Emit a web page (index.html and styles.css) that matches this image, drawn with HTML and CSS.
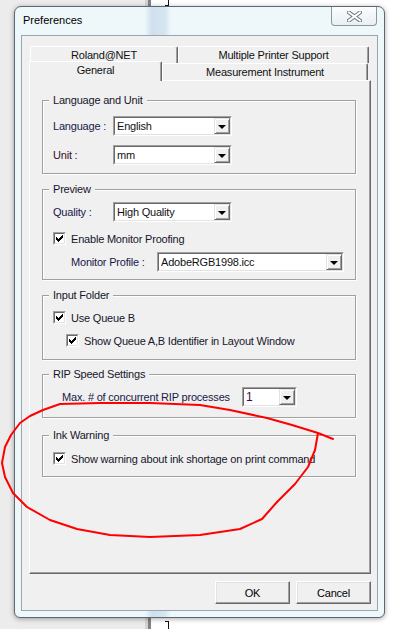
FILE: index.html
```html
<!DOCTYPE html>
<html>
<head>
    <title>Preferences</title>
    <link rel="stylesheet" href="styles.css">
</head>
<body>
    <span class="bracket bracket-top"></span>
    <span class="bracket bracket-bottom"></span>

    <div class="desk">
        <div class="window">
            <div class="titlebar">
                <span class="title">Preferences</span>
                <div class="close">
                    <svg width="15" height="11" viewBox="0 0 15 11">
                        <path d="M2 1.5 L13 9.5 M13 1.5 L2 9.5" stroke="#6c7781" stroke-width="4" stroke-linecap="square"/>
                        <path d="M2 1.5 L13 9.5 M13 1.5 L2 9.5" stroke="#fff" stroke-width="2" stroke-linecap="square"/>
                    </svg>
                </div>
            </div>

            <div class="client">
                <div class="tab-row back">
                    <div class="tab tab-roland">Roland@NET</div>
                    <div class="tab tab-multi">Multiple Printer Support</div>
                </div>
                <div class="tab-row front">
                    <div class="tab tab-general selected">General</div>
                    <div class="tab tab-measure">Measurement Instrument</div>
                </div>

                <div class="panel">
                    <!-- Language and Unit -->
                    <fieldset class="group g-lang">
                        <legend>Language and Unit</legend>
                        <div class="row">
                            <span class="label">Language :</span>
                            <div class="combo w-short">
                                <div class="combo-field">
                                    <span class="combo-value">English</span>
                                    <span class="combo-btn"><i class="arrow"></i></span>
                                </div>
                            </div>
                        </div>
                        <div class="row row-gap">
                            <span class="label label-unit">Unit :</span>
                            <div class="combo w-short">
                                <div class="combo-field">
                                    <span class="combo-value">mm</span>
                                    <span class="combo-btn"><i class="arrow"></i></span>
                                </div>
                            </div>
                        </div>
                    </fieldset>

                    <!-- Preview -->
                    <fieldset class="group g-preview">
                        <legend>Preview</legend>
                        <div class="row">
                            <span class="label">Quality :</span>
                            <div class="combo w-short">
                                <div class="combo-field">
                                    <span class="combo-value">High Quality</span>
                                    <span class="combo-btn"><i class="arrow"></i></span>
                                </div>
                            </div>
                        </div>
                        <label class="check-row cr-proof">
                            <span class="check"><span class="check-inner"><svg width="7" height="7" viewBox="0 0 7 7"><polygon points="0,2 2,4 7,-1 7,2 2,7 0,5" fill="#000"/></svg></span></span>
                            Enable Monitor Proofing
                        </label>
                        <div class="row row-profile">
                            <span class="label label-profile">Monitor Profile :</span>
                            <div class="combo w-long">
                                <div class="combo-field">
                                    <span class="combo-value">AdobeRGB1998.icc</span>
                                    <span class="combo-btn"><i class="arrow"></i></span>
                                </div>
                            </div>
                        </div>
                    </fieldset>

                    <!-- Input Folder -->
                    <fieldset class="group g-input">
                        <legend>Input Folder</legend>
                        <label class="check-row">
                            <span class="check"><span class="check-inner"><svg width="7" height="7" viewBox="0 0 7 7"><polygon points="0,2 2,4 7,-1 7,2 2,7 0,5" fill="#000"/></svg></span></span>
                            Use Queue B
                        </label>
                        <label class="check-row cr-sub">
                            <span class="check"><span class="check-inner"><svg width="7" height="7" viewBox="0 0 7 7"><polygon points="0,2 2,4 7,-1 7,2 2,7 0,5" fill="#000"/></svg></span></span>
                            Show Queue A,B Identifier in Layout Window
                        </label>
                    </fieldset>

                    <!-- RIP Speed Settings -->
                    <fieldset class="group g-rip">
                        <legend>RIP Speed Settings</legend>
                        <div class="row row-rip">
                            <span class="label label-rip">Max. # of concurrent RIP processes</span>
                            <div class="combo w-tiny">
                                <div class="combo-field">
                                    <span class="combo-value num">1</span>
                                    <span class="combo-btn"><i class="arrow"></i></span>
                                </div>
                            </div>
                        </div>
                    </fieldset>

                    <!-- Ink Warning -->
                    <fieldset class="group g-ink">
                        <legend>Ink Warning</legend>
                        <label class="check-row">
                            <span class="check"><span class="check-inner"><svg width="7" height="7" viewBox="0 0 7 7"><polygon points="0,2 2,4 7,-1 7,2 2,7 0,5" fill="#000"/></svg></span></span>
                            Show warning about ink shortage on print command
                        </label>
                    </fieldset>
                </div>

                <div class="buttons">
                    <button class="btn">OK</button>
                    <button class="btn">Cancel</button>
                </div>
            </div>
        </div>
    </div>

    <!-- red marker circle drawn over the screenshot -->
    <svg class="scribble" width="397" height="629" viewBox="0 0 397 629">
        <polyline fill="none" stroke="#f00" stroke-width="2" stroke-linejoin="round" stroke-linecap="round"
            points="333,439 318,433 292,425 267,418 230,410 200,405 150,403 100,403 60,404 43,410 30,416 20,423 11,435 5,447 2,463 5,477 13,493 27,507 50,520 77,529 110,535 150,537 200,535 240,529 262,519 277,502 295,484 308,467 315,450 318,433"/>
    </svg>
</body>
</html>
```

FILE: styles.css
```css
* {
    box-sizing: border-box;
}
body {
    margin: 0;
    width: 397px;
    height: 629px;
    overflow: hidden;
    position: relative;
    font-family: "Liberation Sans", Arial, sans-serif;
    font-size: 11px;
    letter-spacing: -0.2px;
    color: #16162c;
    background: linear-gradient(90deg, #ececec 0 145px, #d4d4d4 145px 148px, #828282 148px 151px, #fff 151px);
}
.bracket {
    position: absolute;
    left: 165px;
    width: 4px;
    height: 6px;
    border-right: 1px solid #111;
}
.bracket-top {
    top: 0;
    border-bottom: 1px solid #111;
}
.bracket-bottom {
    top: 621px;
    height: 8px;
    border-top: 1px solid #111;
}
.desk {
    padding: 6px 12px 0 14px;
}

/* Window frame */
.window {
    width: 371px;
    height: 612px;
    border: 1px solid #5f6870;
    border-radius: 7px 7px 6px 6px;
    background: linear-gradient(90deg, rgba(255,255,255,0) 130px, rgba(170,195,225,.45) 137px, rgba(170,195,225,.35) 150px, rgba(255,255,255,0) 156px), #eef7fa;
    box-shadow: 0 1px 5px rgba(0,0,0,.35);
    padding: 0 6px 6px;
    display: flex;
    flex-direction: column;
}
.titlebar {
    height: 28px;
    display: flex;
    justify-content: space-between;
    align-items: flex-start;
}
.title {
    padding: 7px 0 0 2px;
    color: #000;
    font-size: 11px;
    letter-spacing: 0;
}
.close {
    width: 46px;
    height: 19px;
    margin-right: 1px;
    border: 1px solid #8c969f;
    border-top: none;
    border-radius: 0 0 4px 4px;
    background: linear-gradient(#fbfdfe, #e9eff3);
    display: flex;
    align-items: center;
    justify-content: center;
}
.client {
    flex: 1;
    border: 1px solid #9aa5ad;
    background: #f0f0f0;
    padding: 10px 6px 0 7px;
    display: flex;
    flex-direction: column;
}

/* Tabs */
.tab-row {
    display: flex;
    height: 17px;
}
.tab-row.back {
    margin-left: 1px;
}
.tab {
    height: 17px;
    line-height: 16px;
    text-align: center;
    color: #111;
    background: #f0f0f0;
    border: 1px solid;
    border-bottom: none;
    border-color: #fff #696969 transparent #fff;
    box-shadow: inset -1px 0 0 #a0a0a0;
    border-radius: 2px 2px 0 0;
}
.tab-roland { width: 148px; }
.tab-multi { width: 191px; }
.tab-general { width: 133px; }
.tab-measure { width: 206px; }
.tab.selected {
    position: relative;
    z-index: 1;
    height: 20px;
    margin-top: -2px;
    line-height: 17px;
}
.panel {
    height: 494px;
    border: 1px solid;
    border-color: #fff #696969 #696969 #fff;
    box-shadow: inset -1px -1px 0 #a0a0a0;
    padding: 12px 14px 0 12px;
}

/* Group boxes */
.group {
    margin: 0;
    border: 1px solid #a0a0a0;
    box-shadow: inset 1px 1px 0 #fff, 1px 1px 0 #fff;
    padding: 0 8px 0 10px;
    min-width: 0;
}
.group legend {
    padding: 0 4px;
    margin-left: -4px;
    line-height: 14px;
    background: #f0f0f0;
}
.g-lang { padding-top: 9px; padding-bottom: 8px; }
.g-preview { margin-top: 8px; padding-top: 6px; padding-bottom: 7px; }
.g-input { margin-top: 8px; padding-top: 9px; padding-bottom: 12px; }
.g-rip { margin-top: 7px; padding-top: 6px; padding-bottom: 10px; }
.g-ink { margin-top: 10px; padding-top: 10px; padding-bottom: 11px; }

.row {
    display: flex;
    align-items: center;
    height: 20px;
}
.row-gap { margin-top: 9px; }
.row-profile { margin-top: 7px; }
.label {
    width: 60px;
    color: #18184a;
}
.label-unit { color: #3a0c2c; }
.label-profile {
    width: 86px;
    margin-left: 18px;
}
.label-rip {
    width: 180px;
    margin-left: 9px;
}

/* Combo boxes */
.combo {
    height: 20px;
    border: 1px solid;
    border-color: #a0a0a0 #fff #fff #a0a0a0;
}
.w-short { width: 119px; }
.w-long { width: 187px; }
.w-tiny { width: 55px; }
.combo-field {
    height: 18px;
    display: flex;
    border: 1px solid;
    border-color: #696969 #e3e3e3 #e3e3e3 #696969;
    background: #fff;
}
.combo-value {
    flex: 1;
    padding-left: 2px;
    line-height: 16px;
    color: #111;
    white-space: nowrap;
    overflow: hidden;
}
.combo-value.num {
    color: #3a0c4a;
    font-size: 12px;
}
.combo-btn {
    width: 16px;
    height: 16px;
    border: 1px solid;
    border-color: #e3e3e3 #696969 #696969 #e3e3e3;
    box-shadow: inset 1px 1px 0 #fff, inset -1px -1px 0 #a0a0a0;
    background: #f0f0f0;
    display: flex;
    align-items: center;
    justify-content: center;
}
.arrow {
    width: 0;
    height: 0;
    border-left: 4px solid transparent;
    border-right: 4px solid transparent;
    border-top: 4px solid #000;
    margin-top: 1px;
}

/* Check boxes */
.check-row {
    display: flex;
    align-items: center;
    gap: 5px;
    height: 13px;
    color: #16162c;
}
.cr-proof { margin-top: 10px; }
.cr-sub {
    margin-top: 10px;
    margin-left: 13px;
}
.check {
    width: 13px;
    height: 13px;
    flex: none;
    border: 1px solid;
    border-color: #a0a0a0 #fff #fff #a0a0a0;
}
.check-inner {
    display: flex;
    align-items: center;
    justify-content: center;
    width: 11px;
    height: 11px;
    border: 1px solid;
    border-color: #696969 #e3e3e3 #e3e3e3 #696969;
    background: #fff;
}
.check-inner svg {
    shape-rendering: crispEdges;
}

/* Dialog buttons */
.buttons {
    display: flex;
    justify-content: flex-end;
    gap: 6px;
    margin-top: 7px;
}
.btn {
    width: 75px;
    height: 23px;
    padding: 0;
    font-family: inherit;
    font-size: 11px;
    letter-spacing: inherit;
    color: #000;
    background: #f0f0f0;
    border: 1px solid;
    border-color: #fff #696969 #696969 #fff;
    box-shadow: inset -1px -1px 0 #a0a0a0, inset 1px 1px 0 #e3e3e3;
}

.scribble {
    position: absolute;
    left: 0;
    top: 0;
    pointer-events: none;
}
```
